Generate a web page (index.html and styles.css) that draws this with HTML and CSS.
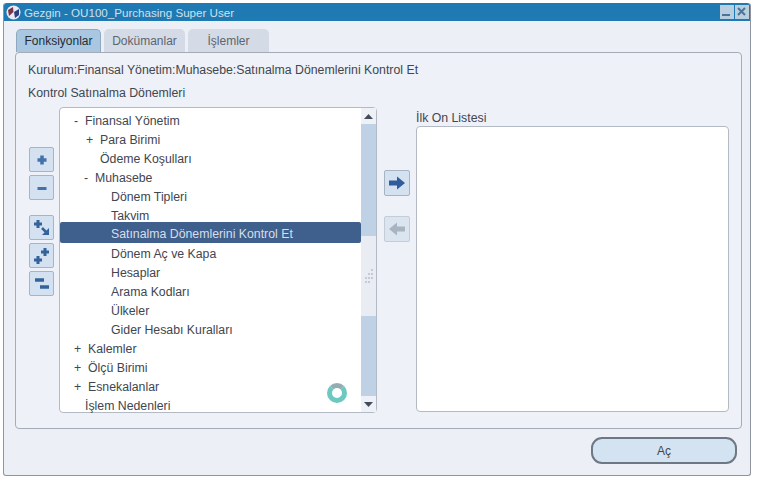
FILE: index.html
```html
<!DOCTYPE html>
<html lang="tr">
<head>
<meta charset="utf-8">
<title>Gezgin</title>
<link rel="stylesheet" href="styles.css">
</head>
<body>
<div class="window">
  <div class="titlebar">
    <svg class="logo" width="15" height="15" viewBox="0 0 15 15"><circle cx="7.5" cy="7.5" r="7" fill="#e6ebf3"/><path d="M2 5 L7 2 L7.500 7 L3 11 Z" fill="#7d3346"/><path d="M8 7 L13 4 L13 10 L9 13 Z" fill="#2c3f80"/></svg>
    <span class="title">Gezgin - OU100_Purchasing Super User</span>
    <span class="winbtn"><svg width="13" height="13" viewBox="0 0 13 13"><rect x="2" y="9" width="8" height="2" fill="#4a7597"/></svg></span>
    <span class="winbtn"><svg width="13" height="13" viewBox="0 0 13 13"><path d="M3 3 L10 10 M10 3 L3 10" stroke="#4a7597" stroke-width="2"/></svg></span>
  </div>
  <div class="content">
    <div class="tabs">
      <div class="tab active">Fonksiyonlar</div>
      <div class="tab">Dokümanlar</div>
      <div class="tab">İşlemler</div>
    </div>
    <div class="panel">
      <div class="crumb">Kurulum:Finansal Yönetim:Muhasebe:Satınalma Dönemlerini Kontrol Et</div>
      <div class="sub">Kontrol Satınalma Dönemleri</div>
      <div class="main">
        <div class="tools">
          <button class="ib"><svg width="14" height="14" viewBox="0 0 14 14"><path d="M7 2.500 V11.500 M2.500 7 H11.500" stroke="#4472a8" stroke-width="3.500"/></svg></button>
          <button class="ib"><svg width="14" height="14" viewBox="0 0 14 14"><path d="M2.500 7.500 H11.500" stroke="#4472a8" stroke-width="3"/></svg></button>
          <button class="ib gap"><svg width="20" height="20" viewBox="0 0 20 20"><path d="M6 2 V10 M2 6 H10" stroke="#34629a" stroke-width="3"/><path d="M10 10 L15 15" stroke="#34629a" stroke-width="2.500"/><path d="M17 10 V17 H10 Z" fill="#34629a"/></svg></button>
          <button class="ib"><svg width="20" height="20" viewBox="0 0 20 20"><path d="M6 10 V18 M2 14 H10" stroke="#34629a" stroke-width="3"/><path d="M13 2 V10 M9 6 H17" stroke="#34629a" stroke-width="3"/></svg></button>
          <button class="ib"><svg width="20" height="20" viewBox="0 0 20 20"><path d="M3 6 H12" stroke="#34629a" stroke-width="3.500"/><path d="M8 13 H17" stroke="#34629a" stroke-width="3.500"/></svg></button>
        </div>
        <div class="tree">
          <div class="rows">
            <div class="row l1"><i>-</i>Finansal Yönetim</div>
            <div class="row l2"><i class="plus">+</i>Para Birimi</div>
            <div class="row l3">Ödeme Koşulları</div>
            <div class="row l2m"><i>-</i>Muhasebe</div>
            <div class="row l4">Dönem Tipleri</div>
            <div class="row l4">Takvim</div>
            <div class="row l4 sel">Satınalma Dönemlerini Kontrol Et</div>
            <div class="row l4">Dönem Aç ve Kapa</div>
            <div class="row l4">Hesaplar</div>
            <div class="row l4">Arama Kodları</div>
            <div class="row l4">Ülkeler</div>
            <div class="row l4">Gider Hesabı Kuralları</div>
            <div class="row l1"><i class="plus">+</i>Kalemler</div>
            <div class="row l1"><i class="plus">+</i>Ölçü Birimi</div>
            <div class="row l1"><i class="plus">+</i>Esnekalanlar</div>
            <div class="row l5">İşlem Nedenleri</div>
            <span class="spinner"></span>
          </div>
          <div class="scroll">
            <div class="sbtn"><svg width="9" height="5" viewBox="0 0 9 5"><path d="M4.500 0 L9 5 H0 Z" fill="#444c5c"/></svg></div>
            <div class="strack s1"></div>
            <div class="thumb"><svg width="10" height="16" viewBox="0 0 10 16"><g fill="#c3cbd6"><rect x="7" y="1" width="2" height="2"/><rect x="4" y="5" width="2" height="2"/><rect x="7" y="5" width="2" height="2"/><rect x="1" y="9" width="2" height="2"/><rect x="4" y="9" width="2" height="2"/><rect x="7" y="9" width="2" height="2"/><rect x="1" y="13" width="2" height="2"/><rect x="4" y="13" width="2" height="2"/></g></svg></div>
            <div class="strack s2"></div>
            <div class="sbtn"><svg width="9" height="5" viewBox="0 0 9 5"><path d="M0 0 H9 L4.500 5 Z" fill="#444c5c"/></svg></div>
          </div>
        </div>
        <div class="movers">
          <button class="ib mv"><svg width="18" height="14" viewBox="0 0 18 14"><path d="M1 4.500 H9 V0.500 L17 7 L9 13.500 V9.500 H1 Z" fill="#2f5c9c"/></svg></button>
          <button class="ib mv off"><svg width="18" height="14" viewBox="0 0 18 14"><path d="M17 4.500 H9 V0.500 L1 7 L9 13.500 V9.500 H17 Z" fill="#a9b4c2"/></svg></button>
        </div>
        <div class="favs">
          <div class="favlabel">İlk On Listesi</div>
          <div class="favbox"></div>
        </div>
      </div>
    </div>
    <div class="footer"><button class="open">Aç</button></div>
  </div>
</div>
</body>
</html>
```
FILE: styles.css
```css
* { box-sizing: border-box; }
html, body { margin: 0; background: #fff; }
body { padding: 3px 0 0 3px; font-family: "Liberation Sans", Arial, sans-serif; font-size: 12.3px; color: #41464f; }
.window { width: 748px; height: 473px; background: #eceff6; border: 1px solid #8f959e; border-top: 0; border-radius: 3px; display: flex; flex-direction: column; }
.titlebar { height: 18px; background: #1f79b2; display: flex; align-items: center; padding: 0 1px 0 2px; color: #cfe0ec; gap: 1px; border-radius: 3px 3px 0 0; }
.logo { margin: 0 2px 0 0; }
.title { flex: 1; font-size: 11.6px; }
.winbtn { width: 14px; height: 14px; background: #b9cfe0; display: flex; }
.content { flex: 1; padding: 8px 8px 0 11px; display: flex; flex-direction: column; }
.tabs { display: flex; gap: 3px; height: 23px; padding-left: 1px; position: relative; z-index: 1; }
.tab { width: 81px; height: 23px; background: #d4dbe6; color: #5d6570; border-radius: 5px 5px 0 0; display: flex; align-items: center; justify-content: center; font-size: 12px; }
.tab.active { width: 85px; background: #a9c7e1; color: #262c36; border: 1px solid #8fa9c0; border-bottom: 0; }
.panel { height: 377px; border: 1px solid #a5acb6; border-radius: 4px; background: #eef1f7; padding: 10px 12px 0; }
.crumb { height: 14px; line-height: 14px; }
.sub { height: 14px; line-height: 14px; margin-top: 9px; }
.main { display: flex; margin-top: 7px; padding-left: 1px; }
.tools { width: 30px; padding-top: 40px; display: flex; flex-direction: column; gap: 3px; flex: none; }
.ib { width: 25px; height: 25px; background: #d3e1f0; border: 1px solid #a9b4c2; border-radius: 2px; padding: 0; display: flex; align-items: center; justify-content: center; }
.tools .gap { margin-top: 12px; }
.tree { width: 318px; height: 306px; display: flex; background: #fff; border: 1px solid #b4bac4; border-radius: 4px; flex: none; }
.rows { flex: 1; position: relative; padding-top: 4px; }
.row { height: 19px; line-height: 19px; white-space: nowrap; }
.row i { font-style: normal; display: inline-block; width: 11px; }
.row .plus { width: 14px; }
.l1 { padding-left: 14px; }
.l2 { padding-left: 26px; }
.l2m { padding-left: 24px; }
.l3 { padding-left: 40px; }
.l4 { padding-left: 51px; }
.l5 { padding-left: 25px; height: 14px; }
.sel { background: #3f5f8d; color: #d6deea; height: 21px; line-height: 25px; margin: -4px 0 2px; border-radius: 2px; }
.spinner { position: absolute; left: 267px; top: 275px; width: 20px; height: 20px; border-radius: 50%; border: 5px solid #6cc8c0; border-top-color: #93adb3; background: #fff; }
.scroll { width: 15px; display: flex; flex-direction: column; background: #f0f2f6; }
.sbtn { height: 16px; display: flex; align-items: center; justify-content: center; background: #eef1f6; }
.strack { background: #bfd1e4; }
.s1 { height: 112px; }
.s2 { flex: 1; }
.thumb { height: 80px; background: #e9edf3; display: flex; align-items: center; justify-content: center; }
.movers { width: 39px; padding: 63px 0 0 7px; display: flex; flex-direction: column; gap: 20px; flex: none; }
.mv { width: 26px; height: 26px; }
.off { background: #dbe5f0; border-color: #c4ccd6; }
.favs { width: 313px; display: flex; flex-direction: column; flex: none; }
.favlabel { height: 19px; line-height: 22px; }
.favbox { width: 313px; height: 286px; background: #fff; border: 1px solid #b4bac4; border-radius: 4px; }
.footer { display: flex; justify-content: flex-end; padding: 8px 5px 0 0; }
.open { width: 146px; height: 27px; background: #d3e3f2; border: 2px solid #6d7884; border-radius: 11px; font: 12px "Liberation Sans", Arial, sans-serif; color: #41464f; }
```
